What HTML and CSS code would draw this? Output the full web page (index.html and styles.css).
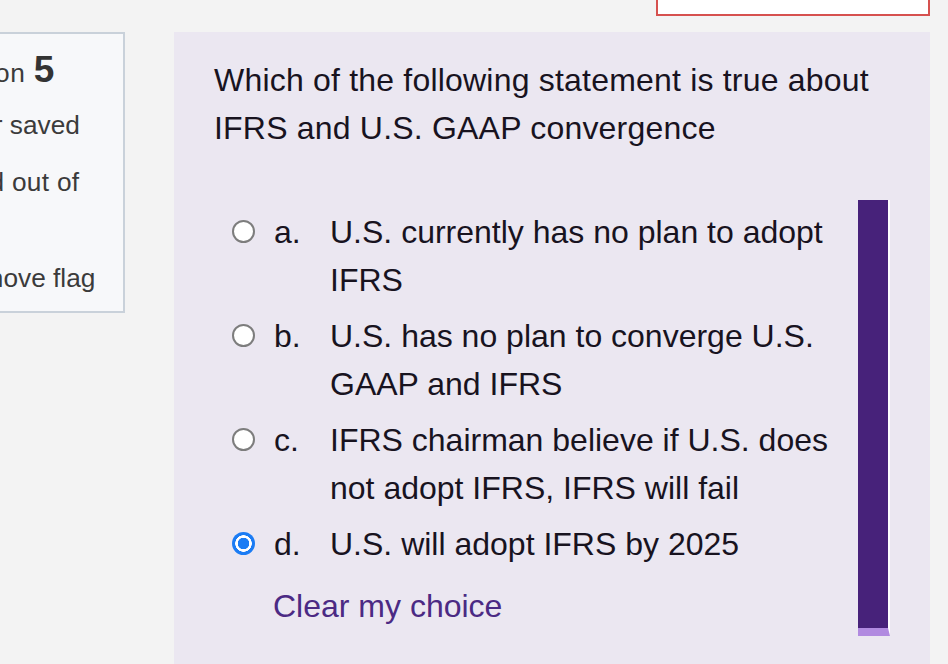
FILE: index.html
```html
<!DOCTYPE html>
<html lang="en">
<head>
<meta charset="utf-8">
<title>Question 5</title>
<link rel="stylesheet" href="styles.css">
</head>
<body>
<div class="topbar">
  <div class="search-box"></div>
</div>
<div class="main">
  <aside class="info">
    <h3 class="qno-line">Question <span class="qno">5</span></h3>
    <div class="state">Answer saved</div>
    <div class="grade">Marked out of 1.00</div>
    <div class="flag">
      <svg class="flag-icon" width="24" height="24" viewBox="0 0 24 24"><path d="M5 2v20M5 3h12l-3 5 3 5H5" fill="#d9534f" stroke="#d9534f" stroke-width="2"/></svg>Remove flag
    </div>
  </aside>
  <section class="question">
    <p class="qtext">Which of the following statement is true about IFRS and U.S. GAAP convergence</p>
    <div class="answer">
      <div class="option">
        <span class="radio"></span>
        <span class="letter">a.</span>
        <span class="opt-text">U.S. currently has no plan to adopt IFRS</span>
      </div>
      <div class="option">
        <span class="radio"></span>
        <span class="letter">b.</span>
        <span class="opt-text">U.S. has no plan to converge U.S. GAAP and IFRS</span>
      </div>
      <div class="option">
        <span class="radio"></span>
        <span class="letter">c.</span>
        <span class="opt-text">IFRS chairman believe if U.S. does not adopt IFRS, IFRS will fail</span>
      </div>
      <div class="option">
        <span class="radio checked"></span>
        <span class="letter">d.</span>
        <span class="opt-text">U.S. will adopt IFRS by 2025</span>
      </div>
    </div>
    <div class="clear">Clear my choice</div>
    <div class="side-bar"></div>
  </section>
</div>
</body>
</html>
```

FILE: styles.css
```css
html, body {
  margin: 0;
  padding: 0;
}
body {
  background: #f3f3f3;
  font-family: "Liberation Sans", Helvetica, Arial, sans-serif;
  overflow: hidden;
  width: 948px;
  height: 664px;
}
.topbar {
  display: flex;
  justify-content: flex-end;
  height: 16px;
  padding-right: 18px;
}
.search-box {
  box-sizing: border-box;
  width: 274px;
  height: 16px;
  background: #fff;
  border: 2px solid #d6514f;
  border-top: none;
}
.main {
  display: flex;
  align-items: flex-start;
  gap: 49px;
  margin-top: 16px;
}
.info {
  box-sizing: border-box;
  flex: 0 0 226px;
  width: 226px;
  height: 281px;
  margin-left: -101px;
  padding: 15px 10px 10px 14px;
  background: #f7f8fa;
  border: 2px solid #c9d1da;
  color: #3b3b3b;
  font-size: 26.25px;
  line-height: 48px;
}
.qno-line {
  margin: 0;
  font-size: 26.25px;
  font-weight: normal;
  line-height: 48px;
  white-space: nowrap;
  letter-spacing: 0.7px;
}
.qno {
  font-size: 37px;
  font-weight: bold;
  line-height: 1;
  letter-spacing: 0;
  color: #333;
}
.state {
  margin-top: 4px;
  white-space: nowrap;
}
.grade {
  margin-top: 9px;
  width: 190px;
  letter-spacing: 0.3px;
}
.flag {
  display: flex;
  align-items: center;
  white-space: nowrap;
}
.flag-icon {
  margin-right: 9px;
}
.question {
  position: relative;
  box-sizing: border-box;
  width: 756px;
  height: 660px;
  padding: 24px 40px;
  background: #ebe7f1;
  color: #18131f;
}
.qtext {
  margin: 0;
  font-size: 32px;
  line-height: 48px;
  letter-spacing: 0.2px;
}
.answer {
  margin-top: 56px;
  width: 642px;
  display: flex;
  flex-direction: column;
  gap: 8px;
  font-size: 32px;
  line-height: 48px;
}
.option {
  display: flex;
  align-items: flex-start;
}
.radio {
  box-sizing: border-box;
  flex: 0 0 23px;
  width: 23px;
  height: 23px;
  margin: 12px 19px 0 18px;
  border-radius: 50%;
  background: #fff;
  border: 2px solid #7d7d7d;
}
.radio.checked {
  border: none;
  background: radial-gradient(circle, #1b7cf4 0 5.5px, #ffffff 6px 8px, #1b7cf4 8.5px);
}
.letter {
  flex: 0 0 56px;
  width: 56px;
}
.opt-text {
  flex: 1;
}
.clear {
  margin-top: 14px;
  padding-left: 59px;
  font-size: 32px;
  line-height: 48px;
  color: #4b2a84;
}
.side-bar {
  position: absolute;
  left: 684px;
  top: 168px;
  width: 30px;
  height: 428px;
  background: #47227a;
  border-bottom: 8px solid #b18ae0;
  border-right: 2px solid #ffffff;
}
```
